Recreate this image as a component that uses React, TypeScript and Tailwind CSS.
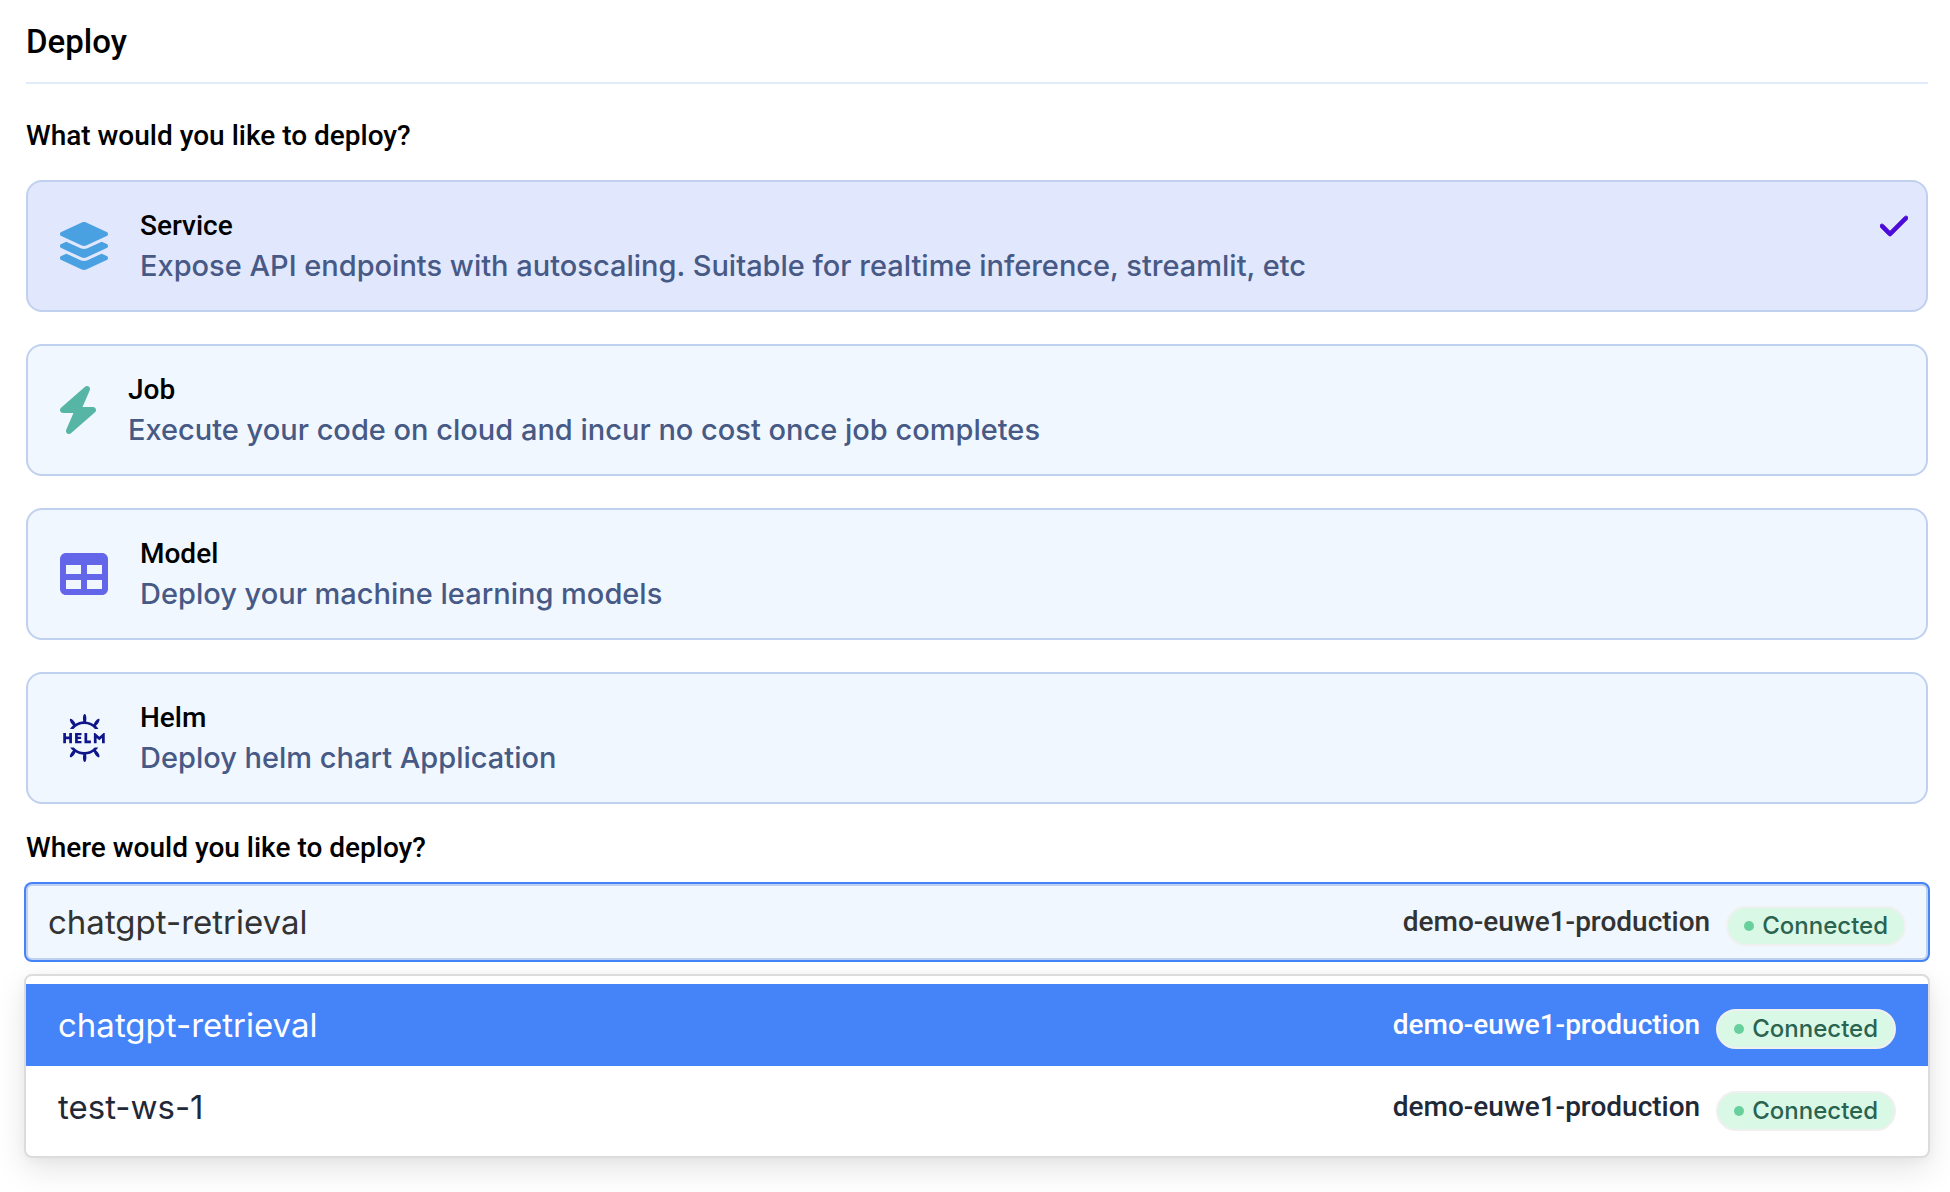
import { useState } from "react";
import type { ReactNode } from "react";
import { FaCheck, FaTable } from "react-icons/fa6";
import { SiHelm } from "react-icons/si";

const workloads: { id: string; title: string; description: string; icon: ReactNode }[] = [
  {
    id: "service",
    title: "Service",
    description: "Expose API endpoints with autoscaling. Suitable for realtime inference, streamlit, etc",
    icon: (
      <svg viewBox="32 0 512 512" className="size-12 shrink-0 fill-[#4aa1e2]" aria-hidden="true">
        <path d="M264.5 5.2c14.9-6.9 32.1-6.9 47 0l218.6 101c8.5 3.9 13.9 12.4 13.9 21.8s-5.4 17.9-13.9 21.8l-218.6 101c-14.9 6.9-32.1 6.9-47 0L45.9 149.8C37.4 145.8 32 137.3 32 128s5.4-17.9 13.9-21.8L264.5 5.2z" />
        <path d="M476.9 209.6l53.2 24.6c8.5 3.9 13.9 12.4 13.9 21.8s-5.4 17.9-13.9 21.8l-218.6 101c-14.9 6.9-32.1 6.9-47 0L45.9 277.8C37.4 273.8 32 265.3 32 256s5.4-17.9 13.9-21.8l53.2-24.6 152 70.2c23.4 10.8 50.4 10.8 73.8 0l152-70.2z" />
        <path d="M324.9 407.8l152-70.2 53.2 24.6c8.5 3.9 13.9 12.4 13.9 21.8s-5.4 17.9-13.9 21.8l-218.6 101c-14.9 6.9-32.1 6.9-47 0L45.9 405.8C37.4 401.8 32 393.3 32 384s5.4-17.9 13.9-21.8l53.2-24.6 152 70.2c23.4 10.8 50.4 10.8 73.8 0z" />
      </svg>
    ),
  },
  {
    id: "job",
    title: "Job",
    description: "Execute your code on cloud and incur no cost once job completes",
    icon: (
      <svg viewBox="32 0 384 512" className="h-12 w-9 shrink-0 fill-[#57b5a6]" aria-hidden="true">
        <path d="M349.4 44.6c5.9-13.7 1.5-29.7-10.6-38.5s-28.6-8-39.9 1.8l-256 224C32.9 240.7 29.4 254.7 34.1 267.2S50.7 288 64 288H175.5L98.6 467.4c-5.9 13.7-1.5 29.7 10.6 38.5s28.6 8 39.9-1.8l256-224c10-8.8 13.6-22.9 8.9-35.3s-16.6-20.7-30-20.7H272.5L349.4 44.6z" />
      </svg>
    ),
  },
  {
    id: "model",
    title: "Model",
    description: "Deploy your machine learning models",
    icon: <FaTable className="size-12 shrink-0 text-[#6466e9]" aria-hidden />,
  },
  {
    id: "helm",
    title: "Helm",
    description: "Deploy helm chart Application",
    icon: <SiHelm className="size-12 shrink-0 text-[#0f1689]" aria-hidden />,
  },
];

const workspaces = [
  { name: "chatgpt-retrieval", cluster: "demo-euwe1-production" },
  { name: "test-ws-1", cluster: "demo-euwe1-production" },
];

function StatusBadge() {
  return (
    <span className="mt-2 flex h-10 items-center gap-2 rounded-full border-2 border-[#f0f0f0] bg-[#daf8e6] px-4 font-['Inter',sans-serif] text-2xl font-medium text-[#2a6450]">
      <span className="size-[10px] rounded-full bg-[#68d09c]" />
      Connected
    </span>
  );
}

function WorkspaceRow({ name, cluster }: { name: string; cluster: string }) {
  return (
    <span className="flex w-full items-center justify-between">
      <span className="font-['Inter',sans-serif] text-[33px] leading-10">{name}</span>
      <span className="flex items-center gap-4">
        <span className="text-[28px] leading-10 font-medium">{cluster}</span>
        <StatusBadge />
      </span>
    </span>
  );
}

export default function App() {
  const [workload, setWorkload] = useState("service");
  const [selected, setSelected] = useState(0);
  const [open, setOpen] = useState(true);

  return (
    <main className="min-h-screen bg-white pt-5 pr-[22px] pl-[26px] font-['Roboto',sans-serif] text-black">
      <h1 className="border-b-2 border-[#e0ebfb] pb-[18px] text-[33px] leading-[44px] font-medium">Deploy</h1>

      <fieldset>
        <legend className="pt-8 pb-6 text-[28px] leading-10 font-medium">What would you like to deploy?</legend>
        <div className="flex flex-col gap-8">
          {workloads.map((item) => (
            <label
              key={item.id}
              className="relative flex cursor-pointer items-center gap-8 rounded-2xl border-2 border-[#bfd1ef] bg-[#f0f7ff] py-6 pr-[18px] pl-8 has-checked:bg-[#e1e7fd]"
            >
              <input
                type="radio"
                name="workload"
                className="sr-only"
                checked={workload === item.id}
                onChange={() => setWorkload(item.id)}
              />
              {item.icon}
              <span className="flex grow flex-col">
                <span className="text-[28px] leading-10 font-medium">{item.title}</span>
                <span className="font-['Inter',sans-serif] text-[29px] leading-10 font-medium text-[#475985]">
                  {item.description}
                </span>
              </span>
              {workload === item.id && (
                <FaCheck
                  className="mt-1 h-8 w-7 self-start stroke-[#4d0bd8] stroke-[12px] text-[#4d0bd8]"
                  aria-hidden
                />
              )}
            </label>
          ))}
        </div>
      </fieldset>

      <section className="relative">
        <h2 id="workspace-label" className="pt-6 pb-4 text-[28px] leading-10 font-medium">
          Where would you like to deploy?
        </h2>
        <button
          type="button"
          aria-labelledby="workspace-label"
          aria-haspopup="listbox"
          aria-expanded={open}
          onClick={() => setOpen(!open)}
          className="flex h-19 w-full items-center rounded-md border-2 border-[#bfd1ef] bg-[#f0f7ff] px-5 text-[#333] ring-2 ring-[#4583f8] outline-none"
        >
          <WorkspaceRow {...workspaces[selected]} />
        </button>
        {open && (
          <ul
            role="listbox"
            aria-labelledby="workspace-label"
            className="absolute -inset-x-0.5 top-full mt-[14px] rounded-lg border-2 border-[#dcdcdc] bg-white py-2 shadow-[0_12px_32px_rgba(0,0,0,0.1),0_2px_12px_rgba(0,0,0,0.04)]"
          >
            {workspaces.map((item, index) => (
              <li
                key={item.name}
                role="option"
                aria-selected={index === selected}
                onClick={() => setSelected(index)}
                className="flex h-[82px] cursor-pointer items-center px-8 text-[#1f2937] aria-selected:bg-[#4583f8] aria-selected:text-white"
              >
                <WorkspaceRow {...item} />
              </li>
            ))}
          </ul>
        )}
      </section>
    </main>
  );
}
